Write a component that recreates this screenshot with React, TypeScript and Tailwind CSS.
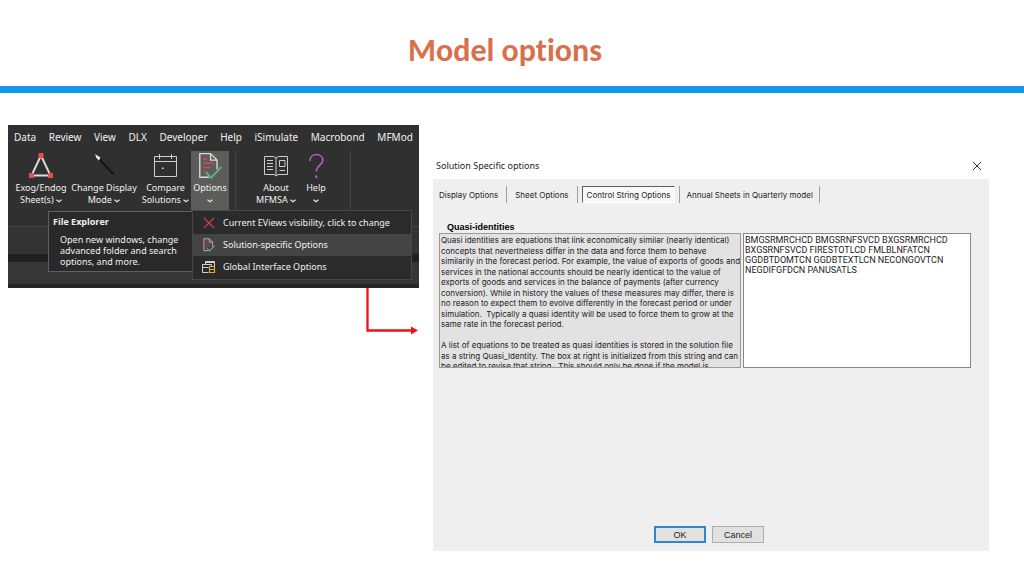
import React from 'react';

const ribbonTabs = ['Data', 'Review', 'View', 'DLX', 'Developer', 'Help', 'iSimulate', 'Macrobond', 'MFMod'];

const description = [
  'Quasi identities are equations that link economically similar (nearly identical)',
  'concepts that nevertheless differ in the data and force them to behave',
  'similarily in the forecast period. For example, the value of exports of goods and',
  'services in the national accounts should be nearly identical to the value of',
  'exports of goods and services in the balance of payments (after currency',
  'conversion). While in history the values of these measures may differ, there is',
  'no reason to expect them to evolve differently in the forecast period or under',
  'simulation.\u00a0 Typically a quasi identity will be used to force them to grow at the',
  'same rate in the forecast period.',
  '\u00a0',
  'A list of equations to be treated as quasi identities is stored in the solution file',
  'as a string Quasi_Identity. The box at right is initialized from this string and can',
  'be edited to revise that string.\u00a0 This should only be done if the model is',
];

const controlString = `BMGSRMRCHCD BMGSRNFSVCD BXGSRMRCHCD
BXGSRNFSVCD FIRESTOTLCD FMLBLNFATCN
GGDBTDOMTCN GGDBTEXTLCN NECONGOVTCN
NEGDIFGFDCN PANUSATLS`;

const Chevron = () => (
  <svg viewBox="0 0 6 4" className="inline-block h-1 w-1.5 align-middle" fill="none" stroke="#e8e8e8" strokeWidth="1.2">
    <path d="M.5 .8 3 2.800 5.500 .8" />
  </svg>
);

const TriangleIcon = () => (
  <svg viewBox="0 0 26 28" className="h-7 w-[26px]" fill="none">
    <path d="M13 3.500 3.500 23.500H22.500Z" stroke="#dedede" strokeWidth="1.900" />
    <path d="M10.500 1h5v5h-5zM1 21h5v5H1zM20 21h5v5h-5z" fill="#ee4b50" />
  </svg>
);

const WandIcon = () => (
  <svg viewBox="0 0 26 28" className="h-7 w-[26px]" fill="none" strokeLinecap="round">
    <path d="m8 6 14 15" stroke="#0c0c0c" strokeWidth="2.600" />
    <path d="m10.500 7.500 12 13" stroke="#6a6a6a" strokeWidth=".6" />
    <path d="m4 2 1.500 4 2.500 2.500L9.500 5.500 7 4Z" fill="#f0f0f0" />
  </svg>
);

const CalendarIcon = () => (
  <svg viewBox="0 0 26 28" className="h-7 w-[26px]" fill="none" stroke="#d0d0d0" strokeWidth="1">
    <path d="M1.500 4.500h22v20h-22zM1.500 9.500h22M6.500 2v5M18.500 2v5" />
    <path d="M9 15.500h1.500V17H9z" fill="#e8e8e8" stroke="none" />
  </svg>
);

const DocCheckIcon = ({ className }: { className: string }) => (
  <svg viewBox="2 1 24 26" className={className} fill="none" strokeWidth="1.300">
    <path d="M13 24.500H4.500v-22h10l6 6V17M14.500 2.500v6h6" stroke="#d8d8d8" />
    <path d="M7.500 7.500h4M7.500 11.500h10M7.500 15.500h7M7.500 19.500h4" stroke="#d04a52" />
    <path d="m10.500 20 4.500 5 9.500-10" stroke="#5bb08d" strokeWidth="1.900" />
  </svg>
);

const BookIcon = () => (
  <svg viewBox="0 0 26 28" className="h-7 w-[26px]" fill="none" stroke="#cfcfcf" strokeWidth="1">
    <path d="M1.500 4.500h9L13 6l2.500-1.500h9v18H15L13 24l-2-1.500H1.500zM13 6v18" />
    <path d="M4 8.500h6M4 11.500h6M4 14.500h6M4 17.500h6M16.500 8.500H22v6h-5.500zM16.500 18.500H22" />
  </svg>
);

const QuestionIcon = () => (
  <svg viewBox="0 0 26 28" className="h-7 w-[26px]" fill="none" stroke="#b45fc0" strokeWidth="1.600">
    <path d="M7 9c0-4 2.500-6.500 6.300-6.500s6.500 2.300 6.500 5.700c0 5-6.500 5-6.500 11.300" />
    <path d="M12.300 23.500h2V26h-2z" fill="#b45fc0" stroke="none" />
  </svg>
);

const CrossIcon = () => (
  <svg viewBox="0 0 14 14" className="size-3.5" fill="none" stroke="#d13f48" strokeWidth="1.200">
    <path d="m2 2 10 10M12 2 2 12" />
  </svg>
);

const GridIcon = () => (
  <svg viewBox="0 0 14 14" className="size-3.5" fill="none" strokeWidth="1">
    <path d="M3.500 4V1.500h9V6M3.500 2.500h9M6.500 12.500h-6v-8h9V6M.5 7.500h6" stroke="#d2d2d2" />
    <path d="M7.500 6.500h5v6h-5zM7.500 9.500h5" stroke="#e0a44c" strokeWidth="1.200" />
  </svg>
);

type RibbonButtonProps = {
  icon: React.ReactNode;
  lines: string[];
  width: string;
  active?: boolean;
};

const RibbonButton = ({ icon, lines, width, active }: RibbonButtonProps) => (
  <button
    type="button"
    className={`flex h-[59px] shrink-0 flex-col items-center whitespace-nowrap pt-px text-[9px] leading-3 ${width} ${
      active ? 'bg-[#5c5c5b]' : ''
    }`}
  >
    {icon}
    <span className="mt-0.5">{lines[0]}</span>
    <span>
      {lines[1]} <Chevron />
    </span>
  </button>
);

const MenuItem = ({ icon, label, active }: { icon: React.ReactNode; label: string; active?: boolean }) => (
  <button
    type="button"
    role="menuitem"
    className={`flex w-full flex-1 items-center gap-[7px] pl-[9px] text-left text-[9px] ${active ? 'bg-[#444444]' : ''}`}
  >
    {icon}
    {label}
  </button>
);

const Ribbon = () => (
  <section className="relative overflow-hidden bg-[#303030] font-['Noto_Sans','Open_Sans',sans-serif] text-[10px] text-[#f0f0f0]">
    <nav className="flex h-6 items-center justify-between pl-1.5 pr-1.5">
      {ribbonTabs.map((tab) => (
        <button type="button" key={tab}>
          {tab}
        </button>
      ))}
    </nav>
    <div className="flex pt-0.5">
      <RibbonButton width="w-[66px]" icon={<TriangleIcon />} lines={['Exog/Endog', 'Sheet(s)']} />
      <RibbonButton width="w-[60px]" icon={<WandIcon />} lines={['Change Display', 'Mode']} />
      <RibbonButton width="w-[57px] pl-1.5" icon={<CalendarIcon />} lines={['Compare', 'Solutions']} />
      <RibbonButton width="w-[38px]" icon={<DocCheckIcon className="h-7 w-[26px]" />} lines={['Options', '']} active />
      <div className="ml-1.5 h-[58px] w-px bg-[#444]" />
      <RibbonButton width="ml-4 w-12" icon={<BookIcon />} lines={['About', 'MFMSA']} />
      <RibbonButton width="w-8" icon={<QuestionIcon />} lines={['Help', '']} />
      <div className="ml-[18px] h-[58px] w-px bg-[#444]" />
    </div>
    <div className="mt-4 h-7 border-t border-[#454545] bg-[#333]" />
    <div className="h-2 bg-[#202020]" />
    <div className="h-[22px] bg-[#363636]" />
    <div className="h-1 bg-[#252525]" />

    <div
      role="tooltip"
      className="absolute left-10 top-[86px] h-[61px] w-[145px] border border-[#606060] bg-[#292929] py-1 pl-1 text-[9px]"
    >
      <p className="font-['Open_Sans'] font-bold leading-3">File Explorer</p>
      <p className="whitespace-nowrap pl-[7px] pt-1.5 leading-[11px]">
        Open new windows, change
        <br />
        advanced folder and search
        <br />
        options, and more.
      </p>
    </div>

    <div role="menu" className="absolute left-[184px] top-[85px] flex h-[70px] w-[220px] flex-col border border-[#484848] bg-[#2b2b2b] py-px">
      <MenuItem icon={<CrossIcon />} label="Current EViews visibility, click to change" />
      <MenuItem icon={<DocCheckIcon className="size-3.5" />} label="Solution-specific Options" active />
      <MenuItem icon={<GridIcon />} label="Global Interface Options" />
    </div>
  </section>
);

const DialogTabs = () => (
  <nav className="flex h-[17px] items-stretch whitespace-nowrap">
    <button type="button" className="pr-2">
      Display Options
    </button>
    <button type="button" className="border-l border-[#a0a0a0] px-2">
      Sheet Options
    </button>
    <div className="border-x border-[#a0a0a0] px-1">
      <button
        type="button"
        className="h-full border border-l-[#606060] border-t-[#606060] border-b-white border-r-white bg-[#f8f8f8] px-1 leading-3"
      >
        Control String Options
      </button>
    </div>
    <button type="button" className="border-r border-[#a0a0a0] px-1.5">
      Annual Sheets in Quarterly model
    </button>
  </nav>
);

const SolutionDialog = () => (
  <section className="font-['Inter',sans-serif] text-[8px] text-[#1c1c1c]">
    <header className="flex h-7 items-center justify-between pl-[3px] pr-2 pt-0.5 font-['Noto_Sans','Open_Sans',sans-serif] text-[9px]">
      <h2>Solution Specific options</h2>
      <button type="button" aria-label="Close">
        <svg viewBox="0 0 8 8" className="size-2" stroke="#333" strokeWidth="1">
          <path d="m0 0 8 8M8 0 0 8" />
        </svg>
      </button>
    </header>
    <div className="flex h-[372px] flex-col bg-[#efefef] pb-2 pl-1.5 pr-[18px] pt-[7px]">
      <DialogTabs />
      <label
        htmlFor="control-string"
        className="ml-1 mt-[18px] self-start px-1 font-['Liberation_Sans',Arial,sans-serif] text-[9px] font-bold leading-3 text-black"
      >
        Quasi-identities
      </label>
      <div className="flex h-[135px] gap-0.5">
        <div className="w-[302px] shrink-0 overflow-hidden border border-[#999] bg-[#e2e2e2] pl-px pt-px">
          <div className="flex h-[136px] flex-col justify-between whitespace-nowrap leading-[10px]">
            {description.map((line, i) => (
              <p key={i}>{line}</p>
            ))}
          </div>
        </div>
        <textarea
          id="control-string"
          defaultValue={controlString}
          className="min-w-0 flex-1 resize-none overflow-hidden whitespace-pre border border-[#888] bg-white pl-px pt-px font-['Roboto',sans-serif] text-[9px] leading-[10px] outline-none"
        />
      </div>
      <footer className="mt-auto flex justify-center gap-1.5 pl-2 font-['Liberation_Sans',Arial,sans-serif] text-[9px]">
        <button type="button" className="h-[17px] w-[52px] border-2 border-[#2f86d0] bg-[#e1e1e1] leading-3">
          OK
        </button>
        <button type="button" className="h-[17px] w-[52px] border border-[#adadad] bg-[#e1e1e1] leading-3">
          Cancel
        </button>
      </footer>
    </div>
  </section>
);

const App = () => {
  return (
    <div className="min-h-screen bg-white">
      <header className="flex h-[93px] items-center justify-center border-b-[7px] border-[#1299ef] pt-4 pr-3.5">
        <h1 className="font-['Carlito','Lato',sans-serif] text-[32px] font-bold text-[#d96f4b] [font-variant-ligatures:none]">
          Model options
        </h1>
      </header>

      <main className="grid grid-cols-[411fr_556fr] items-start gap-3.5 pl-2 pr-[35px] pt-8">
        <div>
          <Ribbon />
          <div className="flex justify-end">
            <svg viewBox="0 0 53 48" className="h-12 w-[53px]" fill="none">
              <path d="M1.500 0v42.500H46" stroke="#f01018" strokeWidth="2.300" />
              <path d="M45 38.500l7 4-7 4z" fill="#f01018" />
            </svg>
          </div>
        </div>
        <div className="pt-[26px]">
          <SolutionDialog />
        </div>
      </main>
    </div>
  );
};

export default App;
